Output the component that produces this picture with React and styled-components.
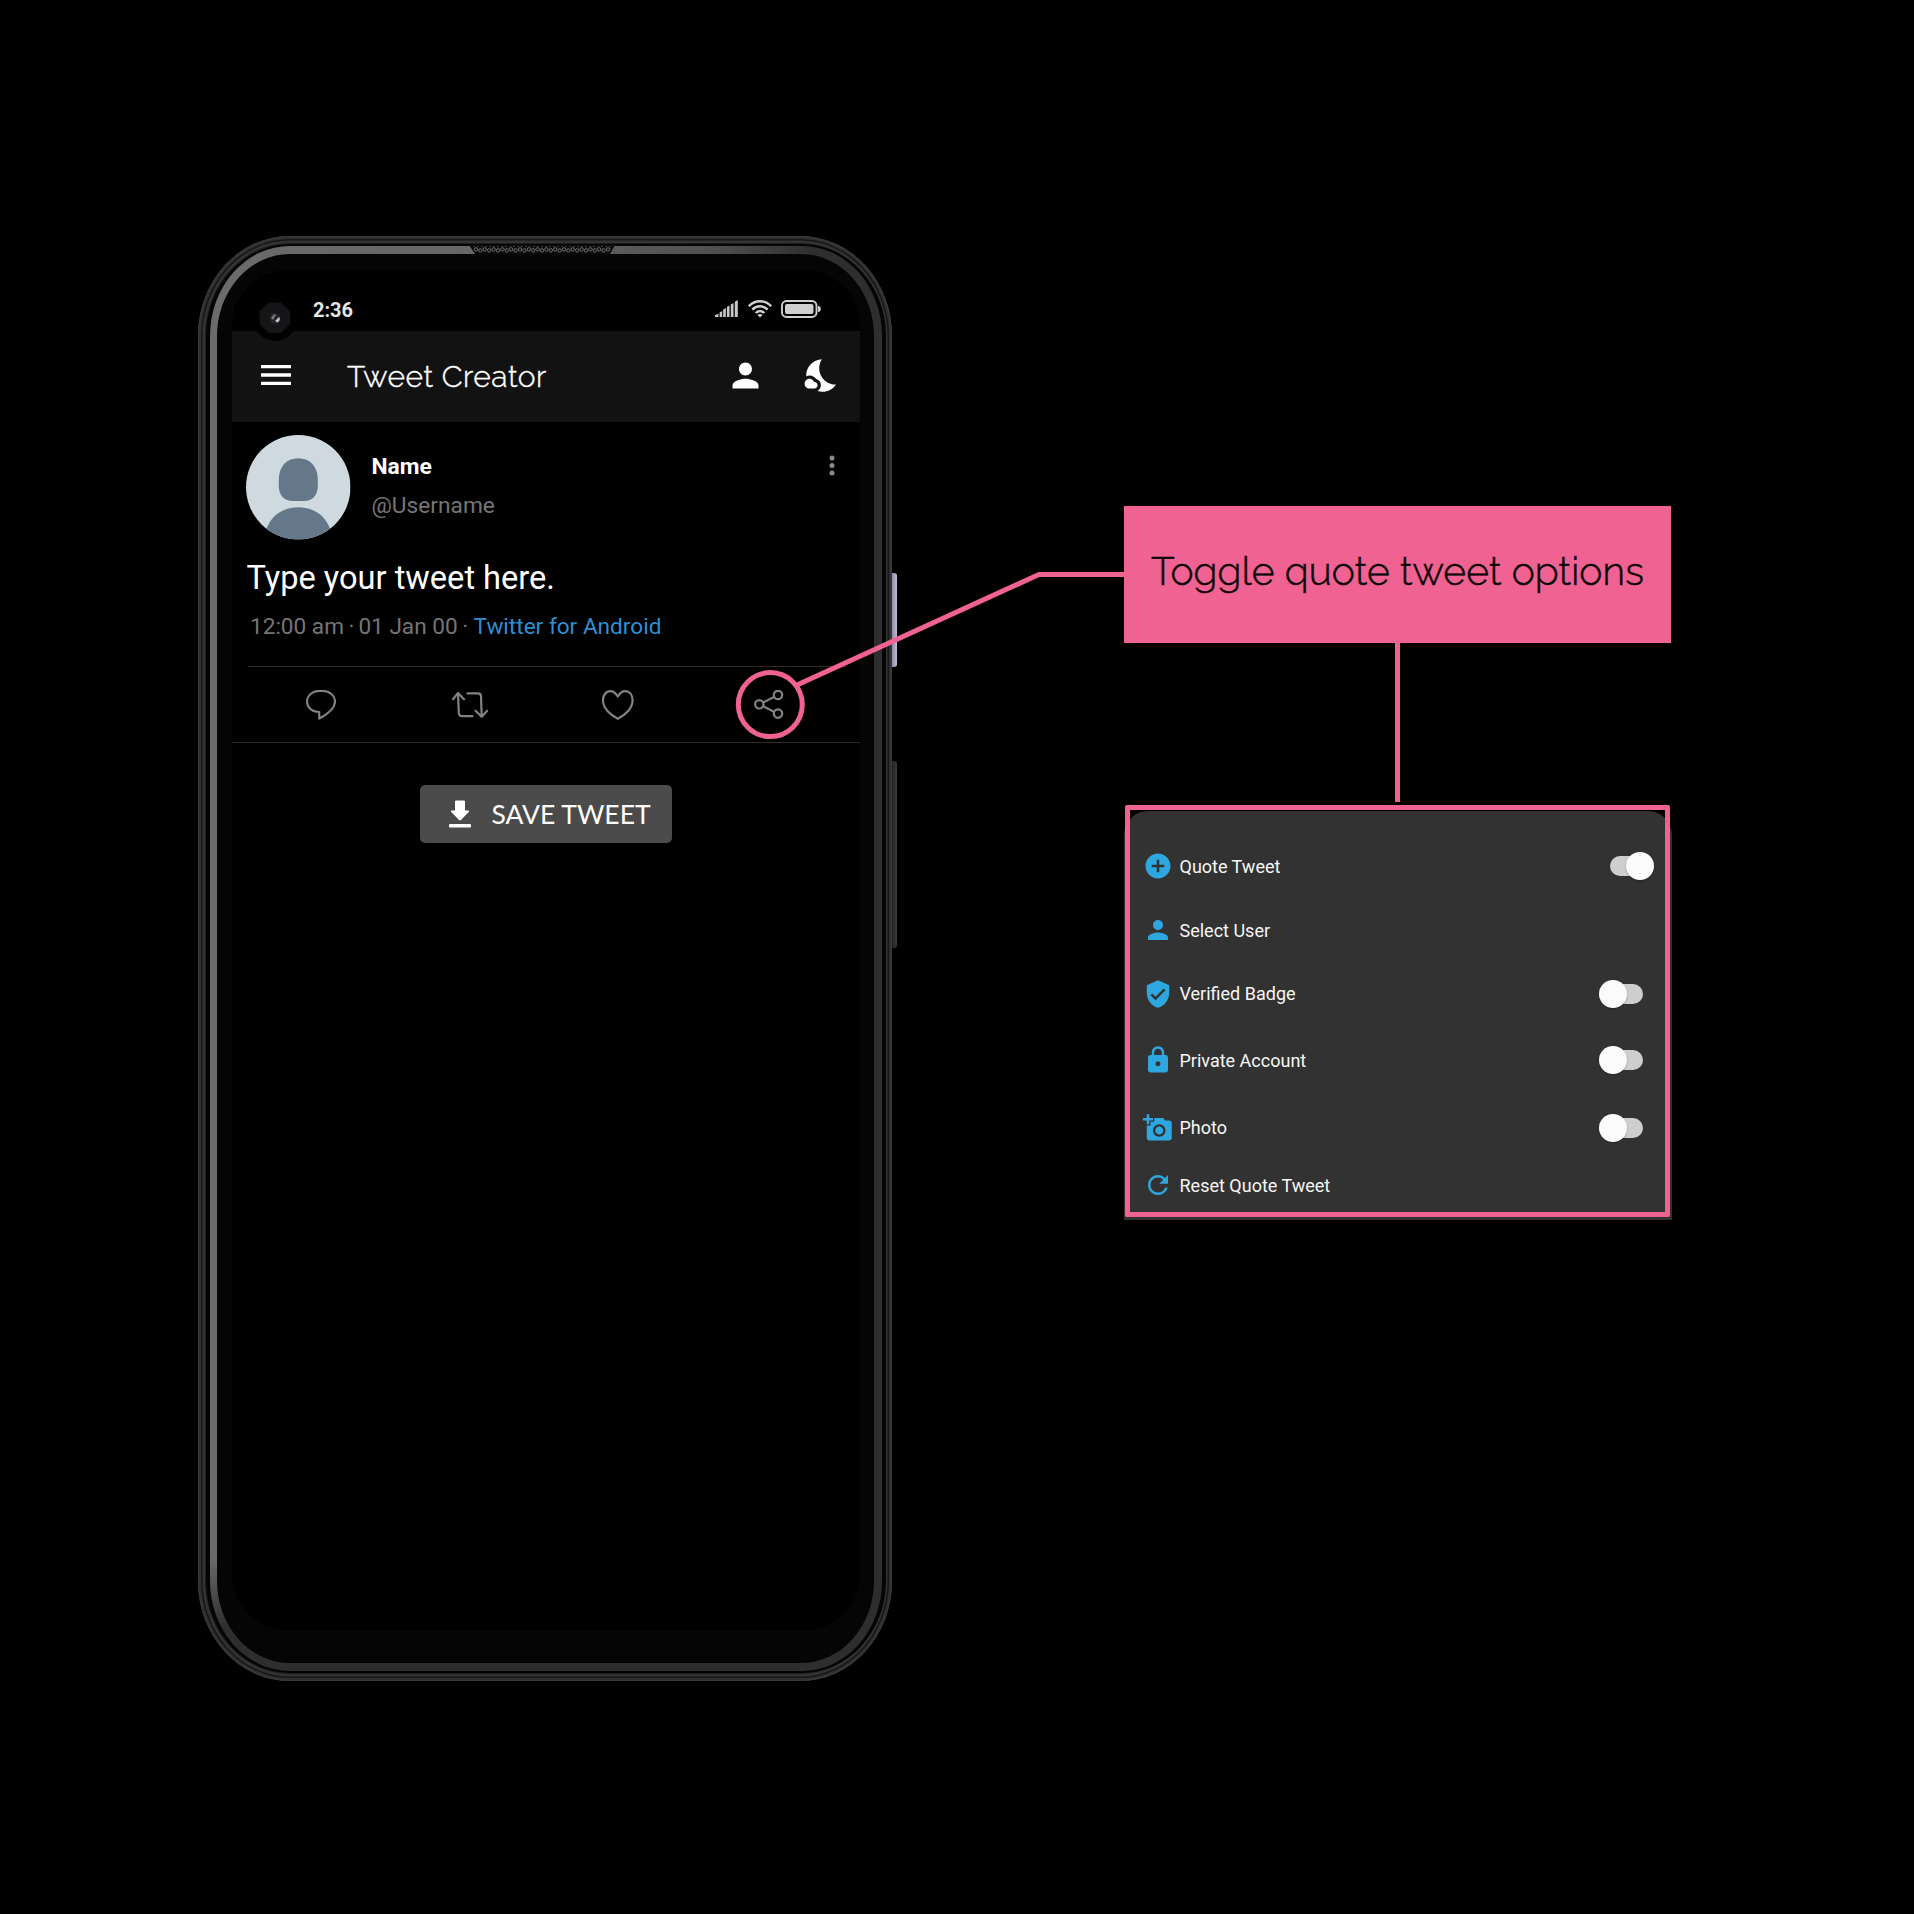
import React from "react";
import styled, { createGlobalStyle } from "styled-components";
import {
  MdMenu,
  MdPerson,
  MdNightsStay,
  MdAddCircle,
  MdVerifiedUser,
  MdLock,
  MdAddAPhoto,
  MdRefresh,
} from "react-icons/md";

const PINK = "#f06292";
const BLUE = "#2ea6df";

const GlobalStyle = createGlobalStyle`
  * { box-sizing: border-box; }
  html, body { margin: 0; padding: 0; background: #000; }
  body { font-family: Roboto, "Liberation Sans", sans-serif; }
  svg { display: block; flex: none; }
`;

const Stage = styled.main`
  position: relative;
  display: flex;
  align-items: flex-start;
  width: 1914px;
  height: 1914px;
  padding: 236px 0 0 198px;
  background: #000;
  overflow: hidden;
`;

/* ---------- phone body ---------- */

const Phone = styled.section`
  position: relative;
  flex: none;
  width: 694px;
  height: 1445px;
  display: flex;
  padding: 8px;
  border-radius: 92px / 100px;
  background: #2a2a2a;
  box-shadow: inset 0 0 0 1px #3a3a3a, inset 0 0 0 3px #303030,
    inset 0 0 0 4.5px #161616, inset 0 0 0 7px #333,
    inset 0 0 0 8px #1c1c1c;
`;

const Groove = styled.div`
  flex: 1;
  display: flex;
  padding: 2px 4px;
  border-radius: 84px / 92px;
  background: #050505;
`;

const Rim = styled.div`
  flex: 1;
  display: flex;
  padding: 8px 8px 8px 7px;
  border-radius: 80px / 90px;
  background: linear-gradient(to bottom, transparent 92%, #2e2e2e 97%),
    linear-gradient(to right, #6b6b6b 0%, #666 45%, #505050 75%, #2e2e2e 90%);
`;

const Bezel = styled.div`
  position: relative;
  flex: 1;
  display: flex;
  padding: 16px 14px 33px 15px;
  border-radius: 73px / 82px;
  background: #050505;
`;

const SideKey = styled.span`
  position: absolute;
  left: 694px;
  top: ${(p) => p.$top}px;
  width: 5px;
  height: ${(p) => p.$height}px;
  border-radius: 0 3px 3px 0;
  background: ${(p) => p.$color};
`;

const Speaker = styled.svg`
  position: absolute;
  left: 271px;
  top: 9px;
`;

const Camera = styled.svg`
  position: absolute;
  left: 34px;
  top: 39.5px;
`;

const Screen = styled.div`
  flex: 1;
  display: flex;
  flex-direction: column;
  border-radius: 56px;
  background: #000;
`;

const StatusBar = styled.div`
  display: flex;
  align-items: center;
  height: 61px;
  padding: 16px 38.5px 0 81px;
`;

const Clock = styled.span`
  flex: 1;
  padding-top: 2px;
  color: #e6e6e6;
  font-size: 20px;
  font-weight: 700;
  line-height: 24px;
`;

const StatusIcons = styled.div`
  display: flex;
  align-items: center;
  gap: 9.5px;
`;

const AppBar = styled.header`
  display: flex;
  align-items: center;
  height: 90.5px;
  padding: 0 18px 2.5px 24px;
  background: #121212;
  color: #fff;
`;

const AppTitle = styled.h1`
  flex: 1;
  margin: 4px 0 0 51px;
  font-family: Raleway, Lato, sans-serif;
  font-size: 30px;
  font-weight: 300;
  -webkit-text-stroke: 0.4px #fff;
  line-height: 40px;
  letter-spacing: 0.55px;
  white-space: nowrap;
`;

const AppActions = styled.div`
  display: flex;
  align-items: center;
  gap: 38px;
`;

/* ---------- tweet ---------- */

const Tweet = styled.article`
  padding: 13.5px 0 0 14px;
`;

const Author = styled.div`
  display: flex;
  align-items: flex-start;
`;

const Names = styled.div`
  flex: 1;
  padding: 12px 0 0 21px;
  line-height: 39px;
  white-space: nowrap;
`;

const Name = styled.div`
  color: #fff;
  font-size: 22.8px;
  font-weight: 700;
`;

const Username = styled.div`
  color: #757575;
  font-size: 22.7px;
`;

const MoreIcon = styled.svg`
  margin: 20px 24.5px 0 0;
`;

const TweetText = styled.p`
  margin: 13.5px 0 0;
  padding-left: 0.5px;
  color: #fff;
  font-size: 32.6px;
  line-height: 50px;
  white-space: nowrap;
`;

const Meta = styled.div`
  padding: 0 0 1.5px 4px;
  color: #757575;
  font-size: 22.6px;
  line-height: 48px;
  white-space: pre;
`;

const Source = styled.span`
  color: #2d8fd2;
`;

const Dot = styled.span`
  margin: 0 ${(p) => p.$after}px 0 4.5px;
`;

const Actions = styled.div`
  display: grid;
  grid-template-columns: repeat(4, 149.4px);
  align-items: center;
  justify-items: center;
  height: 76.5px;
  margin: 13px 14px 0 2px;
  border-top: 1px solid #2b2b2b;
`;

const ActionIcon = styled.svg`
  fill: none;
  stroke: #828282;
  stroke-width: 2.2;
  stroke-linecap: round;
  stroke-linejoin: round;
  margin: 1px ${(p) => p.$shift}px 0 0;
`;

const Separator = styled.hr`
  width: 100%;
  height: 1px;
  margin: 0;
  border: 0;
  background: #2b2b2b;
`;

const SaveButton = styled.button`
  display: flex;
  align-items: center;
  align-self: flex-start;
  width: 252px;
  height: 58px;
  margin: 42px 0 0 188px;
  padding: 0 0 0 29px;
  border: 0;
  border-radius: 5px;
  background: #4b4b4b;
  color: #fff;
  font-family: Lato, sans-serif;
  font-size: 26.5px;
  line-height: 34px;
  white-space: nowrap;
`;

const SaveLabel = styled.span`
  margin-left: 20.5px;
`;

/* ---------- callout and options ---------- */

const Guide = styled.aside`
  display: flex;
  flex-direction: column;
  align-items: center;
  width: 547px;
  margin: 270px 0 0 232px;
`;

const Callout = styled.div`
  display: flex;
  align-items: center;
  justify-content: center;
  width: 100%;
  height: 137px;
  padding-bottom: 8px;
  background: ${PINK};
  color: #0a0507;
  font-family: Raleway, Lato, sans-serif;
  font-size: 39px;
  font-weight: 300;
  -webkit-text-stroke: 0.5px #0a0507;
  line-height: 50px;
  letter-spacing: 0.12px;
  white-space: nowrap;
`;

const Stem = styled.div`
  width: 5px;
  height: 159px;
  background: ${PINK};
`;

const PanelFrame = styled.div`
  position: relative;
  width: 548px;
  margin-top: 3px;
  padding-top: 6px;

  &::after {
    content: "";
    position: absolute;
    inset: 0 1.5px 2.5px 1.5px;
    border: 5px solid ${PINK};
    border-radius: 2px;
  }
`;

const Panel = styled.ul`
  height: 408.5px;
  margin: 0;
  padding: 23px 17.5px 0 19px;
  border-radius: 24px 24px 0 0;
  background: #323232;
  list-style: none;
`;

const Option = styled.li`
  display: flex;
  align-items: center;
  height: ${(p) => p.$height}px;
  padding-right: ${(p) => (p.$inset ? 11 : 0)}px;
  color: ${BLUE};
`;

const OptionLabel = styled.span`
  flex: 1;
  margin-left: 7px;
  padding-top: 1px;
  color: #f6f6f6;
  font-size: 18px;
  line-height: 24px;
  white-space: nowrap;
`;

const Toggle = styled.span`
  display: grid;
  grid-template: 28px / 44.5px;
  align-items: center;
`;

const Groovebar = styled.span`
  grid-area: 1 / 1;
  justify-self: ${(p) => (p.$on ? "start" : "end")};
  width: 38px;
  height: 20px;
  border-radius: 10px;
  background: #cecece;
`;

const Thumb = styled.span`
  grid-area: 1 / 1;
  justify-self: ${(p) => (p.$on ? "end" : "start")};
  width: 28px;
  height: 28px;
  border-radius: 50%;
  background: #fbfbfb;
  box-shadow: 0 1px 2px rgba(0, 0, 0, 0.25);
`;

const Pointer = styled.svg`
  position: absolute;
  left: 730px;
  top: 560px;
  fill: none;
  stroke: ${PINK};
  stroke-width: 5;
  pointer-events: none;
`;

const Switch = ({ on }) => (
  <Toggle>
    <Groovebar $on={on} />
    <Thumb $on={on} />
  </Toggle>
);

const options = [
  { label: "Quote Tweet", icon: MdAddCircle, height: 64, toggle: "on" },
  { label: "Select User", icon: MdPerson, height: 64 },
  { label: "Verified Badge", icon: MdVerifiedUser, height: 63.5, toggle: "off" },
  { label: "Private Account", icon: MdLock, height: 69.5, toggle: "off" },
  { label: "Photo", icon: MdAddAPhoto, height: 65.5, toggle: "off" },
  { label: "Reset Quote Tweet", icon: MdRefresh, height: 49 },
];

const SpeakerGrille = () => (
  <Speaker width="146" height="10" viewBox="0 0 146 10">
    <path d="M0 0H146L141 9H6Z" fill="#0b0b0b" />
    <g fill="none" stroke="#7a7a7a" strokeWidth="0.9">
      {Array.from({ length: 31 }, (_, i) => (
        <circle key={i} cx={7 + i * 4.4} cy={i % 2 ? 5.4 : 4.4} r="1.7" />
      ))}
    </g>
    <path d="M4 1.6H142" stroke="#4a4a4a" strokeWidth="0.8" strokeDasharray="2 2" />
  </Speaker>
);

const FrontCamera = () => (
  <Camera width="48" height="48" viewBox="0 0 48 48">
    <circle cx="24" cy="25" r="22" fill="#010101" />
    <path d="M17.5 8.5H30L39 17.5V30L30 39H17.5L8.5 30V17.5Z" fill="#151517" />
    <circle cx="24" cy="24.500" r="5.500" fill="#232326" />
    <path d="M20 24l3-4 2 1-3 5z" fill="#77747d" />
    <path d="M24 27l4-4c1.500 1 .8 4.500-1.500 5.500z" fill="#c4c2ca" />
  </Camera>
);

const Signal = () => (
  <svg width="23" height="17" viewBox="0 0 23 17" fill="#c9c9c9">
    <path d="M0 17V15.200L3.400 13.400V17ZM4.600 17V12.400L7.200 11V17ZM8.200 17V9.600L10.800 8V17ZM11.900 17V7L14.500 5.400V17ZM15.800 17V4.400L18.500 2.900V17ZM19.800 17V1.800L22.800 0V17Z" />
  </svg>
);

const Wifi = () => (
  <svg width="24" height="18" viewBox="0 0 24 18" fill="none" stroke="#d0d0d0" strokeWidth="2.400">
    <path d="M.8 6.200C7 -.4 17 -.4 23.200 6.200" />
    <path d="M4.300 9.600C8.600 5.200 15.400 5.200 19.700 9.600" />
    <path d="M7.700 13C10.200 10.600 13.800 10.600 16.300 13" />
    <path d="M12 17.600L9.400 15C10.800 13.700 13.200 13.700 14.600 15Z" fill="#d0d0d0" stroke="none" />
  </svg>
);

const Battery = () => (
  <svg width="40" height="18" viewBox="0 0 40 18">
    <rect x="1" y="1" width="34.500" height="16" rx="4.500" fill="none" stroke="#cfcfcf" strokeWidth="1.900" />
    <rect x="4" y="4" width="28.500" height="10" rx="2" fill="#cfcfcf" />
    <path d="M37 5.800C39.200 6.200 39.800 7.400 39.800 9S39.200 11.800 37 12.200Z" fill="#cfcfcf" />
  </svg>
);

const Avatar = () => (
  <svg width="104.500" height="104.500" viewBox="0 0 104.500 104.500">
    <defs>
      <clipPath id="avatar">
        <circle cx="52.250" cy="52.250" r="52.250" />
      </clipPath>
    </defs>
    <g clipPath="url(#avatar)">
      <rect width="104.500" height="104.500" fill="#cedae0" />
      <path
        d="M52.300 23.300C64 23.300 71.800 31.500 71.800 45V51C71.800 60 66.500 66 58 66H46.600C38.100 66 32.800 60 32.800 51V45C32.800 31.500 40.600 23.300 52.300 23.300Z"
        fill="#647889"
      />
      <path d="M18 105C20 84 34 72.300 52.300 72.300S84.500 84 86.500 105Z" fill="#647889" />
    </g>
  </svg>
);

export default function App() {
  return (
    <>
      <GlobalStyle />
      <Stage>
        <Phone>
          <Groove>
            <Rim>
              <Bezel>
                <Screen>
                  <StatusBar>
                    <Clock>2:36</Clock>
                    <StatusIcons>
                      <Signal />
                      <Wifi />
                      <Battery />
                    </StatusIcons>
                  </StatusBar>
                  <AppBar>
                    <MdMenu size={40} />
                    <AppTitle>Tweet Creator</AppTitle>
                    <AppActions>
                      <MdPerson size={39} />
                      <MdNightsStay size={39} />
                    </AppActions>
                  </AppBar>
                  <Tweet>
                    <Author>
                      <Avatar />
                      <Names>
                        <Name>Name</Name>
                        <Username>@Username</Username>
                      </Names>
                      <MoreIcon width="6" height="21" viewBox="0 0 6 21" fill="#8a8a8a">
                        <circle cx="3" cy="3" r="2.500" />
                        <circle cx="3" cy="10.500" r="2.500" />
                        <circle cx="3" cy="18" r="2.500" />
                      </MoreIcon>
                    </Author>
                    <TweetText>Type your tweet here.</TweetText>
                    <Meta>
                      12:00 am<Dot $after={4}>·</Dot>01 Jan 00<Dot $after={5.5}>·</Dot>
                      <Source>Twitter for Android</Source>
                    </Meta>
                    <Actions>
                      <ActionIcon $shift={3} width="30" height="30" viewBox="0 0 30 30">
                        <path d="M13.200 22C6 22 1 17.500 1 11.500C1 5.500 6.500 1 13 1H17C23.500 1 29 5.500 29 11.500C29 19.500 21 24.500 13.200 28.500Z" />
                      </ActionIcon>
                      <ActionIcon $shift={5} width="36" height="26" viewBox="0 0 36 26">
                        <path d="M.9 7.200L6 1L12 7.200M6 1L6.800 21C7 23 8 24.200 10 24.200H20.500M15.400 1.300H26C28 1.300 29 2.300 29 4.300L29.700 24.800M23.500 18.800L29.700 24.800L35.200 18.800" />
                      </ActionIcon>
                      <ActionIcon $shift={7} width="32" height="30" viewBox="0 0 32 30">
                        <path d="M15.800 6.500C13.500 3 11 1.200 8.500 1.200C4 1.200 1 5 1 10.500C1 18 8 25 15.800 28.800C23.600 25 30.600 18 30.600 10.500C30.600 5 27.600 1.200 23 1.200C20.500 1.200 18 3 15.800 6.500Z" />
                      </ActionIcon>
                      <ActionIcon $shift={3} width="30" height="29" viewBox="0 0 30 29">
                        <circle cx="5.300" cy="14.300" r="4.200" />
                        <circle cx="24" cy="5" r="4.200" />
                        <circle cx="24" cy="23.600" r="4.200" />
                        <path d="M9.200 12.400L20 7M9.200 16.200L20 21.700" />
                      </ActionIcon>
                    </Actions>
                  </Tweet>
                  <Separator />
                  <SaveButton>
                    <svg width="22" height="28" viewBox="0 0 22 28" fill="#fff">
                      <path d="M7 .4H15Q16 .4 16 1.400V10.500H19.400Q20.600 10.700 19.900 11.700L12 20Q11 20.800 10 20L2.100 11.700Q1.400 10.700 2.600 10.500H6V1.400Q6 .4 7 .4Z" />
                      <rect x="0" y="24" width="22" height="3.600" rx="1.300" />
                    </svg>
                    <SaveLabel>SAVE TWEET</SaveLabel>
                  </SaveButton>
                </Screen>
                <FrontCamera />
              </Bezel>
            </Rim>
          </Groove>
          <SpeakerGrille />
          <SideKey $top={337} $height={94} $color="linear-gradient(to right, #8d88a3, #c3bcd9)" />
          <SideKey $top={525} $height={187} $color="linear-gradient(to right, #222, #3a3a3c)" />
        </Phone>

        <Guide>
          <Callout>Toggle quote tweet options</Callout>
          <Stem />
          <PanelFrame>
            <Panel>
              {options.map(({ label, icon: Icon, height, toggle }) => (
                <Option key={label} $height={height} $inset={toggle === "off"}>
                  <Icon size={30} />
                  <OptionLabel>{label}</OptionLabel>
                  {toggle && <Switch on={toggle === "on"} />}
                </Option>
              ))}
            </Panel>
          </PanelFrame>
        </Guide>

        <Pointer width="394" height="182" viewBox="730 560 394 182">
          <circle cx="770.300" cy="704.600" r="32" />
          <path d="M797 685L1039 574.500H1124" />
        </Pointer>
      </Stage>
    </>
  );
}
